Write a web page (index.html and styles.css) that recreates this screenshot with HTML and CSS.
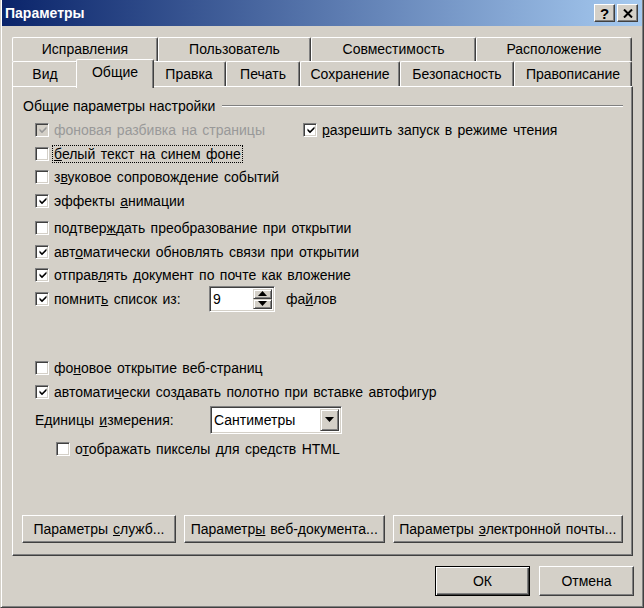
FILE: index.html
```html
<!DOCTYPE html>
<html lang="ru">
<head>
    <meta charset="UTF-8">
    <title>Параметры</title>
    <link rel="stylesheet" href="styles.css">
</head>
<body>
    <div class="window">
        <div class="titlebar">
            <span class="title">Параметры</span>
            <div class="caption-buttons">
                <button class="caption-btn help">?</button>
                <button class="caption-btn">
                    <svg width="10" height="9" viewBox="0 0 10 9"><path d="M1 0.5 L9 8.5 M9 0.5 L1 8.5" stroke="#000" stroke-width="2"/></svg>
                </button>
            </div>
        </div>

        <div class="tabs">
            <div class="tab-row back">
                <div class="tab" style="width:146px">Исправления</div>
                <div class="tab" style="width:153px">Пользователь</div>
                <div class="tab" style="width:165px">Совместимость</div>
                <div class="tab" style="width:156px">Расположение</div>
            </div>
            <div class="tab-row front">
                <div class="tab" style="width:66px">Вид</div>
                <div class="tab selected" style="width:78px">Общие</div>
                <div class="tab" style="width:74px">Правка</div>
                <div class="tab" style="width:74px">Печать</div>
                <div class="tab" style="width:100px">Сохранение</div>
                <div class="tab" style="width:114px">Безопасность</div>
                <div class="tab" style="width:118px">Правописание</div>
            </div>
        </div>

        <div class="panel">
            <div class="group-title">
                <span>Общие параметры настройки</span>
                <span class="etched"></span>
            </div>

            <div class="options first">
                <div class="row">
                    <label class="check disabled wide">
                        <span class="box checked"><svg width="8" height="8" viewBox="0 0 7 8"><polygon points="0,2.5 2.5,5 7,0.5 7,2.8 2.5,7.3 0,4.8"/></svg></span>
                        фоновая разбивка на страницы
                    </label>
                    <label class="check">
                        <span class="box checked"><svg width="8" height="8" viewBox="0 0 7 8"><polygon points="0,2.5 2.5,5 7,0.5 7,2.8 2.5,7.3 0,4.8"/></svg></span>
                        <span><u>р</u>азрешить запуск в режиме чтения</span>
                    </label>
                </div>
                <div class="row">
                    <label class="check">
                        <span class="box"></span>
                        <span class="focus"><u>б</u>елый текст на синем фоне</span>
                    </label>
                </div>
                <div class="row">
                    <label class="check">
                        <span class="box"></span>
                        <span>з<u>в</u>уковое сопровождение событий</span>
                    </label>
                </div>
                <div class="row">
                    <label class="check">
                        <span class="box checked"><svg width="8" height="8" viewBox="0 0 7 8"><polygon points="0,2.5 2.5,5 7,0.5 7,2.8 2.5,7.3 0,4.8"/></svg></span>
                        <span>эффекты <u>а</u>нимации</span>
                    </label>
                </div>
            </div>

            <div class="options second">
                <div class="row">
                    <label class="check">
                        <span class="box"></span>
                        <span>подтвер<u>ж</u>дать преобразование при открытии</span>
                    </label>
                </div>
                <div class="row">
                    <label class="check">
                        <span class="box checked"><svg width="8" height="8" viewBox="0 0 7 8"><polygon points="0,2.5 2.5,5 7,0.5 7,2.8 2.5,7.3 0,4.8"/></svg></span>
                        <span>авт<u>о</u>матически обновлять связи при открытии</span>
                    </label>
                </div>
                <div class="row">
                    <label class="check">
                        <span class="box checked"><svg width="8" height="8" viewBox="0 0 7 8"><polygon points="0,2.5 2.5,5 7,0.5 7,2.8 2.5,7.3 0,4.8"/></svg></span>
                        <span>отправ<u>л</u>ять документ по почте как вложение</span>
                    </label>
                </div>
                <div class="row">
                    <label class="check recent">
                        <span class="box checked"><svg width="8" height="8" viewBox="0 0 7 8"><polygon points="0,2.5 2.5,5 7,0.5 7,2.8 2.5,7.3 0,4.8"/></svg></span>
                        <span>помнит<u>ь</u> список из:</span>
                    </label>
                    <div class="spinner">
                        <span class="spinner-value">9</span>
                        <span class="spinner-arrows">
                            <span class="arrow-btn"><svg width="9" height="5" viewBox="0 0 9 5"><polygon points="4.5,0 9,5 0,5"/></svg></span>
                            <span class="arrow-btn"><svg width="9" height="5" viewBox="0 0 9 5"><polygon points="0,0 9,0 4.5,5"/></svg></span>
                        </span>
                    </div>
                    <span class="suffix">фа<u>й</u>лов</span>
                </div>
            </div>

            <div class="options third">
                <div class="row">
                    <label class="check">
                        <span class="box"></span>
                        <span>фо<u>н</u>овое открытие веб-страниц</span>
                    </label>
                </div>
                <div class="row">
                    <label class="check">
                        <span class="box checked"><svg width="8" height="8" viewBox="0 0 7 8"><polygon points="0,2.5 2.5,5 7,0.5 7,2.8 2.5,7.3 0,4.8"/></svg></span>
                        <span>автомати<u>ч</u>ески создавать полотно при вставке автофигур</span>
                    </label>
                </div>
                <div class="row combo-row">
                    <span class="field-label">Единицы <u>и</u>змерения:</span>
                    <div class="combo">
                        <span class="combo-value">Сантиметры</span>
                        <span class="arrow-btn combo-btn"><svg width="9" height="5" viewBox="0 0 9 5"><polygon points="0,0 9,0 4.5,5"/></svg></span>
                    </div>
                </div>
                <div class="row indent">
                    <label class="check">
                        <span class="box"></span>
                        <span>о<u>т</u>ображать пикселы для средств HTML</span>
                    </label>
                </div>
            </div>

            <div class="panel-buttons">
                <button class="btn" style="width:155px">Параметры <u>с</u>лужб...</button>
                <button class="btn" style="width:202px">Параметр<u>ы</u> веб-документа...</button>
                <button class="btn" style="width:232px">Параметры <u>э</u>лектронной почты...</button>
            </div>
        </div>

        <div class="footer">
            <button class="btn default">ОК</button>
            <button class="btn">Отмена</button>
        </div>
    </div>
</body>
</html>
```

FILE: styles.css
```css
:root {
    --face: #d4d0c8;
    --light: #ffffff;
    --shadow: #808080;
    --dark: #404040;
}

* {
    box-sizing: border-box;
}

body {
    margin: 0;
    background: var(--face);
    font-family: "Liberation Sans", Arial, sans-serif;
    font-size: 14px;
    word-spacing: 1.5px;
    color: #000;
}

u {
    text-underline-offset: 1px;
}

.window {
    width: 644px;
    height: 608px;
    background: var(--face);
    border: 1px solid;
    border-top: 0;
    border-color: var(--face) var(--dark) var(--dark) var(--face);
    box-shadow: inset 1px 0 var(--light), inset -1px -1px var(--shadow);
    padding: 0 1px 1px 1px;
    display: flex;
    flex-direction: column;
}

.titlebar {
    height: 26px;
    display: flex;
    align-items: center;
    padding: 0 4px 0 3px;
    background: linear-gradient(to right, #0a246a, #a6caf0);
    color: #fff;
}

.title {
    font-weight: bold;
    font-size: 14px;
}

.caption-buttons {
    margin-left: auto;
    display: flex;
    gap: 2px;
}

.caption-btn {
    width: 21px;
    height: 18px;
    padding: 0;
    background: var(--face);
    border: 1px solid;
    border-color: var(--light) var(--dark) var(--dark) var(--light);
    box-shadow: inset -1px -1px var(--shadow);
    display: flex;
    align-items: center;
    justify-content: center;
    font-family: "Liberation Sans", Arial, sans-serif;
    font-weight: bold;
    font-size: 15px;
    line-height: 1;
}

/* tabs */

.tabs {
    margin-top: 11px;
    padding-left: 10px;
}

.tab-row {
    display: flex;
}

.tab-row.back {
    height: 24px;
}

.tab-row.front {
    height: 25px;
    align-items: flex-end;
}

.tab {
    height: 100%;
    display: flex;
    align-items: center;
    justify-content: center;
    background: var(--face);
    border-top: 1px solid var(--light);
    border-left: 1px solid var(--light);
    border-right: 1px solid var(--dark);
    box-shadow: inset -1px 0 var(--shadow);
    border-radius: 2px 2px 0 0;
    white-space: nowrap;
}

.tab-row.back .tab {
    padding-bottom: 1px;
}

.tab.selected {
    position: relative;
    z-index: 1;
    height: 29px;
    margin: 0 -2px -2px -2px;
    padding-bottom: 4px;
}

/* panel */

.panel {
    width: 621px;
    height: 470px;
    margin-left: 10px;
    border: 1px solid;
    border-color: var(--light) var(--dark) var(--dark) var(--light);
    box-shadow: inset -1px -1px var(--shadow);
    padding: 11px 9px 12px 10px;
    display: flex;
    flex-direction: column;
}

.group-title {
    height: 16px;
    display: flex;
    align-items: center;
    word-spacing: 0;
}

.etched {
    flex: 1;
    margin-left: 7px;
    height: 2px;
    border-top: 1px solid var(--shadow);
    border-bottom: 1px solid var(--light);
}

.options {
    padding-left: 12px;
}

.options.first {
    margin-top: 4.5px;
}

.options.second {
    margin-top: 4px;
}

.options.third {
    margin-top: 46px;
}

.row {
    height: 23.5px;
    display: flex;
    align-items: center;
}

.row.indent {
    margin-top: 4px;
    padding-left: 21px;
}

.check {
    display: flex;
    align-items: center;
    gap: 5px;
    white-space: nowrap;
}

.check.wide {
    width: 268px;
}

.check.recent {
    width: 174px;
}

.check.disabled {
    color: #999;
}

.box {
    width: 14px;
    height: 14px;
    flex: none;
    background: #fff;
    border: 1px solid;
    border-color: var(--shadow) var(--light) var(--light) var(--shadow);
    box-shadow: inset 1px 1px var(--dark), inset -1px -1px var(--face);
    display: flex;
    align-items: center;
    justify-content: center;
}

.box svg {
    fill: #000;
    margin-left: 1px;
}

.disabled .box {
    background: var(--face);
}

.disabled .box svg {
    fill: #999;
}

.focus {
    outline: 1px dotted #000;
    outline-offset: 0;
    padding: 0 1px;
    margin-left: -1px;
}

/* spinner and combo */

.spinner,
.combo {
    display: flex;
    background: #fff;
    border: 1px solid;
    border-color: var(--shadow) var(--light) var(--light) var(--shadow);
    box-shadow: inset 1px 1px var(--dark), inset -1px -1px var(--face);
    padding: 2px;
}

.spinner {
    width: 66px;
    height: 26px;
    flex: none;
}

.spinner-value {
    flex: 1;
    display: flex;
    align-items: center;
    padding-left: 1px;
}

.spinner-arrows {
    width: 19px;
    display: flex;
    flex-direction: column;
}

.arrow-btn {
    flex: 1;
    display: flex;
    align-items: center;
    justify-content: center;
    background: var(--face);
    border: 1px solid;
    border-color: var(--face) var(--dark) var(--dark) var(--face);
    box-shadow: inset 1px 1px var(--light), inset -1px -1px var(--shadow);
}

.arrow-btn svg {
    fill: #000;
}

.suffix {
    margin-left: 11px;
}

.combo-row {
    height: 28px;
    margin-top: 2px;
}

.field-label {
    width: 175px;
}

.combo {
    width: 132px;
    height: 28px;
}

.combo-value {
    flex: 1;
    display: flex;
    align-items: center;
    padding-left: 1px;
}

.combo-btn {
    flex: none;
    width: 19px;
}

/* buttons */

.btn {
    height: 28px;
    padding: 0;
    background: var(--face);
    border: 1px solid;
    border-color: var(--light) var(--dark) var(--dark) var(--light);
    box-shadow: inset -1px -1px var(--shadow);
    font-family: "Liberation Sans", Arial, sans-serif;
    font-size: 14px;
    word-spacing: 1px;
    color: #000;
}

.btn.default {
    border-color: #000;
    box-shadow: inset 1px 1px var(--light), inset -1px -1px var(--dark), inset -2px -2px var(--shadow);
}

.panel-buttons {
    margin-top: auto;
    margin-left: -1px;
    display: flex;
    gap: 8px;
}

.footer {
    margin-top: 10px;
    padding-right: 8px;
    display: flex;
    justify-content: flex-end;
    gap: 9px;
}

.footer .btn {
    width: 95px;
    height: 30px;
}
```
